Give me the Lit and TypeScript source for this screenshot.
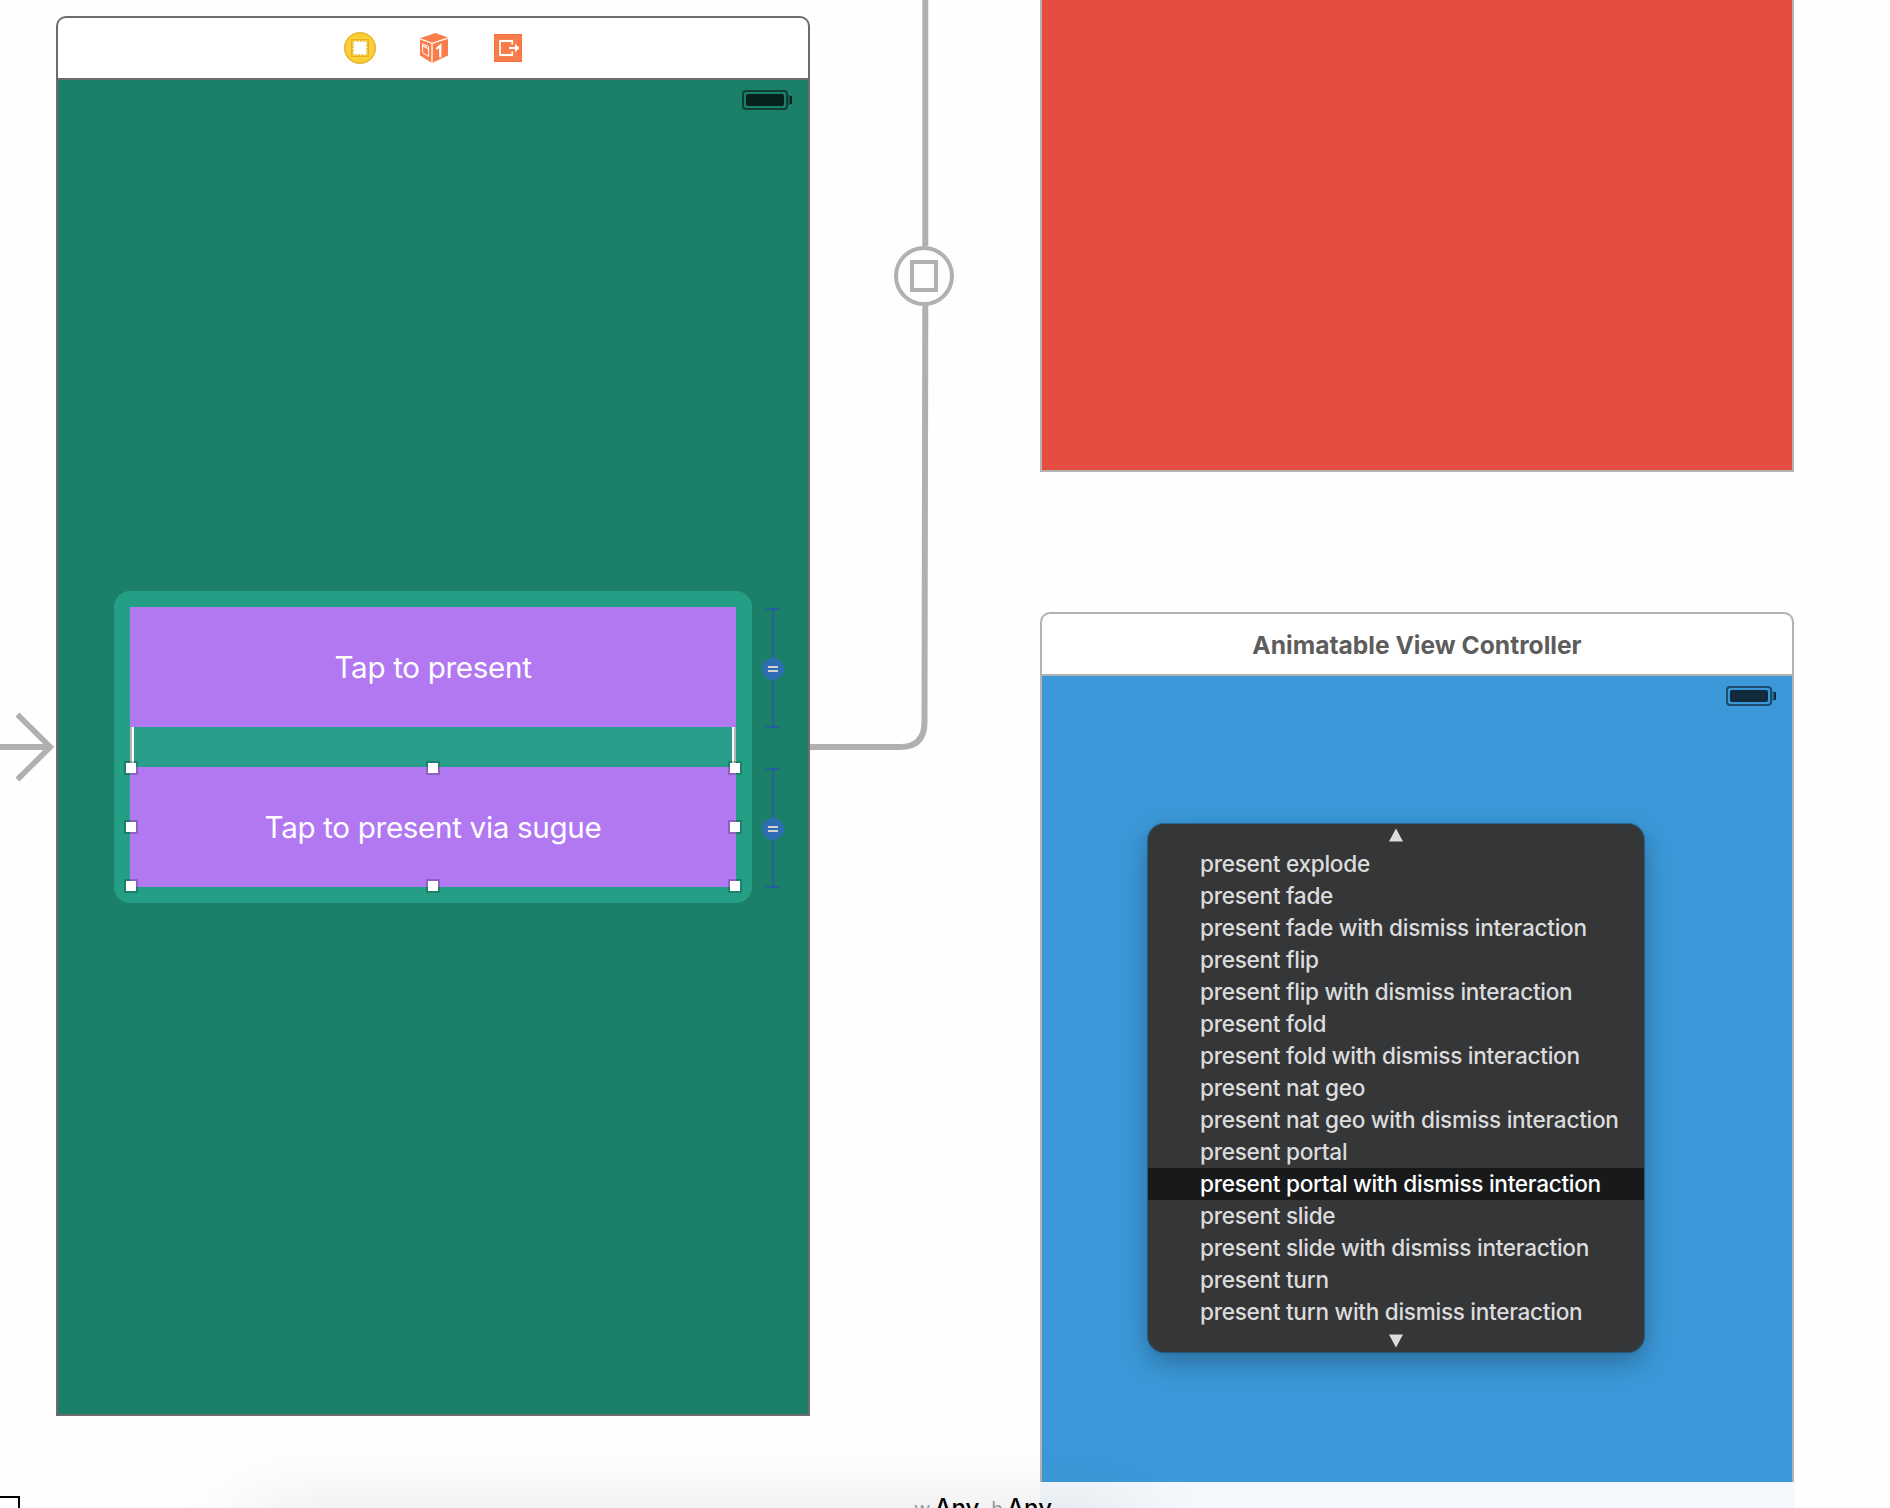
import { LitElement, html, css, svg } from "lit";
import { customElement } from "lit/decorators.js";
import { classMap } from "lit/directives/class-map.js";

@customElement("battery-glyph")
class BatteryGlyph extends LitElement {
  static styles = css`
    :host { display: block; width: 50px; height: 20px; }
    .glyph { display: block; }
  `;
  render() {
    return html`<svg class="glyph" width="50" height="20" viewBox="0 0 50 20">
      <rect x="1" y="1" width="44" height="18" rx="3" fill="none" stroke="#000" stroke-opacity=".5" stroke-width="2" />
      <rect x="4" y="4" width="38" height="12" rx="2" fill="#000" fill-opacity=".73" />
      <path d="M46 5h2v10h-2z" fill="#000" fill-opacity=".3" />
      <path d="M48 6h2v8h-2z" fill="#000" fill-opacity=".7" />
    </svg>`;
  }
}

@customElement("dock-icons")
class DockIcons extends LitElement {
  static styles = css`
    :host { display: flex; justify-content: center; align-items: center; }
    .icons { display: flex; align-items: center; gap: 44px; }
    .icon { display: block; }
    .exit { margin-left: 2px; }
  `;
  render() {
    return html`<div class="icons">
      <svg class="icon" width="32" height="32" viewBox="0 0 32 32">
        <circle cx="16" cy="16" r="15.3" fill="#fdcf36" stroke="#e9b22f" stroke-width="1.4" />
        <rect x="7.7" y="7.7" width="16.6" height="16.6" fill="#fdcf36" stroke="#e3ab2e" stroke-width="1.1" />
        <rect x="9" y="9" width="14" height="14" fill="#fff" />
        <rect x="9.4" y="9.4" width="13.2" height="13.2" fill="none" stroke="#e0a832" stroke-width=".9" stroke-dasharray="1.6 1.7" />
      </svg>
      <svg class="icon" width="28" height="30" viewBox="0 0 28 30">
        <path d="M15.5 0 28 4.6V22.6L12 30 0 22.6V5.2Z" fill="#fb7c4b" />
        <path d="M0.4 5.8 12 10.4 28 5M12 10.4V29.5" fill="none" stroke="#fff" stroke-width="1.3" />
        <path d="M2.6 10.6 8.6 13.6V23.6L2.6 19.6ZM2.6 13 8.6 16M4.2 11.6v2.1M6.3 12.6v2.1" fill="none" stroke="#fff" stroke-width="1" />
        <path d="M16.4 16 20.3 12.6V24.4" fill="none" stroke="#fff" stroke-width="2.2" />
      </svg>
      <svg class="icon exit" width="28" height="28" viewBox="0 0 28 28">
        <rect x=".5" y=".5" width="27" height="27" fill="#fb7c4b" stroke="#f26f40" />
        <path d="M18.2 10.4V7H6V21H18.2V17.6" fill="none" stroke="#fff" stroke-width="1.8" />
        <path d="M15 13h6V9.8L25.3 14 21 18.2V15h-6z" fill="#fff" />
      </svg>
    </div>`;
  }
}

@customElement("height-constraint")
class HeightConstraint extends LitElement {
  static styles = css`
    :host { display: block; width: 22px; height: 120px; }
    .mark { display: block; }
  `;
  render() {
    return html`<svg class="mark" width="22" height="120" viewBox="0 0 22 120">
      <path d="M4 1h14M4 119h14M11 1v118" fill="none" stroke="#25609a" stroke-width="2" />
      <circle cx="11" cy="61" r="11" fill="#2f6db3" />
      <path d="M6 59h10M6 63h10" stroke="#d4d2cc" stroke-width="2" />
    </svg>`;
  }
}

@customElement("transition-menu")
class TransitionMenu extends LitElement {
  static styles = css`
    :host {
      display: flex; flex-direction: column; width: 496px; height: 528px;
      border-radius: 16px; background: #353638; overflow: hidden;
      box-shadow: 0 0 1px 1px rgba(0,0,0,.3), 0 10px 28px rgba(0,0,0,.3);
      font-family: Inter, "Liberation Sans", sans-serif; color: #dcdcdc;
    }
    .scroll { height: 24px; display: flex; justify-content: center; box-sizing: border-box; padding-top: 4px; }
    .scroll.down { padding-top: 6px; }
    .arrow { display: block; }
    .row {
      height: 32px; line-height: 31px; padding-left: 52px; white-space: nowrap;
      font-size: 22.6px; font-weight: 500; letter-spacing: -0.29px;
    }
    .active { background: #18191b; color: #fff; }
  `;
  private items = [
    "present explode", "present fade", "present fade with dismiss interaction",
    "present flip", "present flip with dismiss interaction", "present fold",
    "present fold with dismiss interaction", "present nat geo",
    "present nat geo with dismiss interaction", "present portal",
    "present portal with dismiss interaction", "present slide",
    "present slide with dismiss interaction", "present turn",
    "present turn with dismiss interaction",
  ];
  render() {
    return html`
      <div class="scroll"><svg class="arrow" width="14" height="14"><path d="M7 .5 14 13.5H0z" fill="#dcdcdc" /></svg></div>
      ${this.items.map((t, i) => html`<div class=${classMap({ row: true, active: i === 10 })}>${t}</div>`)}
      <div class="scroll down"><svg class="arrow" width="14" height="14"><path d="M0 .5H14L7 13.5z" fill="#dcdcdc" /></svg></div>`;
  }
}

@customElement("app-root")
class AppRoot extends LitElement {
  static styles = css`
    :host {
      display: block; position: relative; width: 1890px; height: 1508px; overflow: hidden;
      background: #fefefe; font-family: Inter, "Liberation Sans", sans-serif;
    }
    .wires { position: absolute; left: 0; top: 0; }
    .scene {
      position: absolute; box-sizing: border-box; display: flex; flex-direction: column;
      width: 754px; border: 2px solid #b2b2b2;
    }
    .home { left: 56px; top: 16px; height: 1400px; border-color: #6c6c6c; border-radius: 10px 10px 0 0; background: #1c7f69; }
    .red { left: 1040px; top: -900px; height: 1372px; background: #e54d42; }
    .target { left: 1040px; top: 612px; height: 1000px; border-radius: 10px 10px 0 0; background: #3b99d9; }
    .bar {
      height: 60px; display: flex; align-items: center; justify-content: center;
      border-bottom: 2px solid #b2b2b2; border-radius: 8px 8px 0 0; background: #fff;
    }
    .home .bar { border-bottom-color: #6c6c6c; }
    .title { font-size: 24.6px; font-weight: 700; color: #5d5d5d; line-height: 30px; padding-top: 2px; white-space: nowrap; }
    .status { display: flex; justify-content: flex-end; padding: 10px 16px 0 0; }
    .body { display: flex; align-items: flex-start; padding: 481px 0 0 56px; }
    .stack {
      position: relative; box-sizing: border-box; width: 638px; height: 312px; padding: 16px;
      border-radius: 16px; background: #249f85; display: flex; flex-direction: column;
    }
    .button {
      height: 120px; display: flex; align-items: center; justify-content: center; background: #b278f2;
      color: #fff; font-size: 29.6px; font-weight: 400; letter-spacing: -0.32px; white-space: nowrap;
    }
    .gap { height: 40px; box-sizing: border-box; background: #299e8b; border: solid #b5b5b5; border-width: 0 2px; }
    .gap-inner { height: 40px; border: solid #fff; border-width: 0 2px; }
    .handles { position: absolute; left: 10px; top: 170px; }
    .constraints { display: flex; flex-direction: column; gap: 40px; padding: 17px 0 0 10px; }
    .popup { position: absolute; left: 1148px; top: 824px; }
    .footer { position: absolute; left: 1040px; top: 1482px; width: 754px; height: 26px; background: #f3f8fc; }
    .glow { position: absolute; left: 250px; top: 1526px; width: 880px; height: 400px; box-shadow: 0 0 84px rgba(0,0,0,.14); }
    .corner { position: absolute; left: -10px; top: 1496px; width: 26px; height: 30px; border: 2px solid #000; background: #fff; }
    .sizes {
      position: absolute; left: 914px; top: 1494px; display: flex; align-items: baseline;
      font-size: 24px; line-height: 28px; font-weight: 500; color: #000; white-space: nowrap;
    }
    .dim { font-size: 20px; font-weight: 400; color: #999; margin-right: 4px; }
    .dim.h { margin-left: 12px; }
  `;

  private handles() {
    const points = [
      [7, 7], [309, 7], [611, 7],
      [7, 66], [611, 66],
      [7, 125], [309, 125], [611, 125],
    ];
    return html`<svg class="handles" width="618" height="132">
      ${points.map(([x, y]) => svg`<rect x=${x - 7} y=${y - 7} width="14" height="14" fill="#000" fill-opacity=".2" />
        <rect x=${x - 5} y=${y - 5} width="10" height="10" fill="#fff" />`)}
    </svg>`;
  }

  render() {
    return html`
      <svg class="wires" width="1890" height="1508" fill="none" stroke="#b0b0b0">
        <path d="M0 747H50" stroke-width="6" />
        <path d="M17.4 714.4 50.2 747 17.4 779.6" stroke-width="5.6" />
        <path d="M810 747H900Q924.5 747 924.5 722L925.3 305M925.3 246V0" stroke-width="6" />
        <circle cx="924" cy="276" r="28" stroke-width="4" />
        <rect x="912" y="262" width="24" height="28" stroke-width="4" />
      </svg>
      <section class="scene red"></section>
      <section class="scene home">
        <div class="bar"><dock-icons></dock-icons></div>
        <div class="status"><battery-glyph></battery-glyph></div>
        <div class="body">
          <div class="stack">
            <div class="button">Tap to present</div>
            <div class="gap"><div class="gap-inner"></div></div>
            <div class="button">Tap to present via sugue</div>
            ${this.handles()}
          </div>
          <div class="constraints">
            <height-constraint></height-constraint>
            <height-constraint></height-constraint>
          </div>
        </div>
      </section>
      <section class="scene target">
        <div class="bar"><div class="title">Animatable View Controller</div></div>
        <div class="status"><battery-glyph></battery-glyph></div>
      </section>
      <div class="footer"></div>
      <div class="glow"></div>
      <transition-menu class="popup"></transition-menu>
      <div class="corner"></div>
      <div class="sizes"><span class="dim">w</span><span>Any</span><span class="dim h">h</span><span>Any</span></div>
    `;
  }
}
